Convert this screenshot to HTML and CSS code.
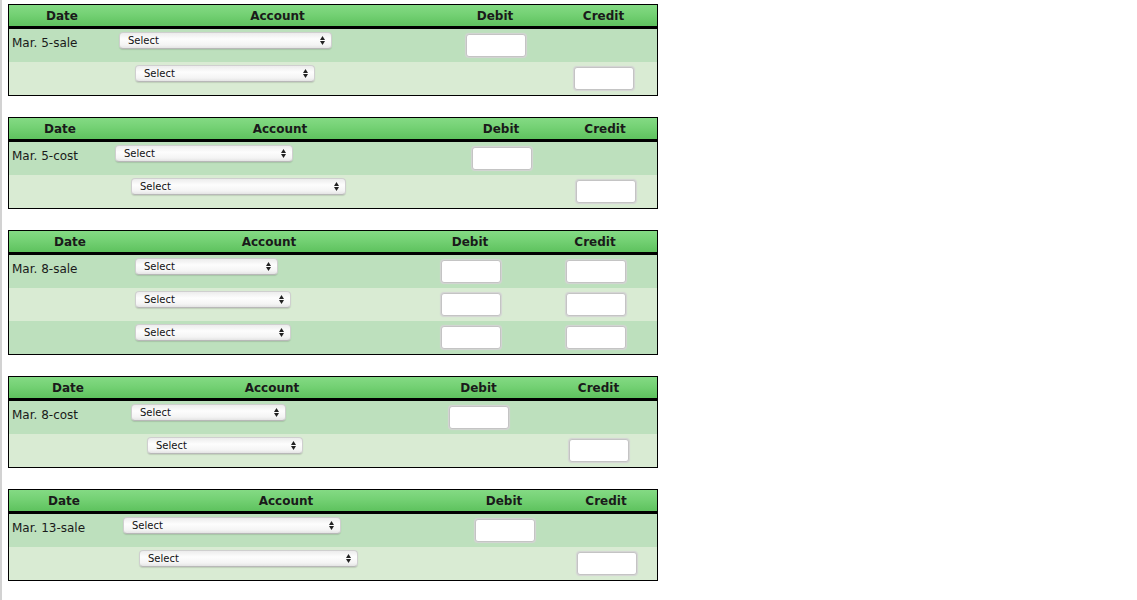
FILE: index.html
```html
<!DOCTYPE html>
<html lang="en">

<head>
    <meta charset="UTF-8">
    <meta name="viewport" content="width=device-width, initial-scale=1.0">
    <title>Journal Entries</title>
    <link rel="stylesheet" href="styles.css">
</head>

<body>
    <div class="page">

        <!-- Mar. 5 sale -->
        <table class="journal j1">
            <colgroup><col class="c-date"><col class="c-acct"><col class="c-dr"><col class="c-cr"></colgroup>
            <thead>
                <tr><th>Date</th><th>Account</th><th>Debit</th><th>Credit</th></tr>
            </thead>
            <tbody>
                <tr>
                    <td class="date">Mar. 5-sale</td>
                    <td><span class="pick w213"><select><option>Select</option></select><svg viewBox="0 0 5 9"><path d="M0 4L2.5 0L5 4Z M0 5L2.5 9L5 5Z"/></svg></span></td>
                    <td><input class="amount" type="text"></td>
                    <td></td>
                </tr>
                <tr class="alt">
                    <td></td>
                    <td><span class="pick indent w180"><select><option>Select</option></select><svg viewBox="0 0 5 9"><path d="M0 4L2.5 0L5 4Z M0 5L2.5 9L5 5Z"/></svg></span></td>
                    <td></td>
                    <td><input class="amount" type="text"></td>
                </tr>
            </tbody>
        </table>

        <!-- Mar. 5 cost -->
        <table class="journal j2">
            <colgroup><col class="c-date"><col class="c-acct"><col class="c-dr"><col class="c-cr"></colgroup>
            <thead>
                <tr><th>Date</th><th>Account</th><th>Debit</th><th>Credit</th></tr>
            </thead>
            <tbody>
                <tr>
                    <td class="date">Mar. 5-cost</td>
                    <td><span class="pick w178"><select><option>Select</option></select><svg viewBox="0 0 5 9"><path d="M0 4L2.5 0L5 4Z M0 5L2.5 9L5 5Z"/></svg></span></td>
                    <td><input class="amount" type="text"></td>
                    <td></td>
                </tr>
                <tr class="alt">
                    <td></td>
                    <td><span class="pick indent w215"><select><option>Select</option></select><svg viewBox="0 0 5 9"><path d="M0 4L2.5 0L5 4Z M0 5L2.5 9L5 5Z"/></svg></span></td>
                    <td></td>
                    <td><input class="amount" type="text"></td>
                </tr>
            </tbody>
        </table>

        <!-- Mar. 8 sale -->
        <table class="journal j3">
            <colgroup><col class="c-date"><col class="c-acct"><col class="c-dr"><col class="c-cr"></colgroup>
            <thead>
                <tr><th>Date</th><th>Account</th><th>Debit</th><th>Credit</th></tr>
            </thead>
            <tbody>
                <tr>
                    <td class="date">Mar. 8-sale</td>
                    <td><span class="pick w143"><select><option>Select</option></select><svg viewBox="0 0 5 9"><path d="M0 4L2.5 0L5 4Z M0 5L2.5 9L5 5Z"/></svg></span></td>
                    <td><input class="amount" type="text"></td>
                    <td><input class="amount" type="text"></td>
                </tr>
                <tr class="alt">
                    <td></td>
                    <td><span class="pick w156"><select><option>Select</option></select><svg viewBox="0 0 5 9"><path d="M0 4L2.5 0L5 4Z M0 5L2.5 9L5 5Z"/></svg></span></td>
                    <td><input class="amount" type="text"></td>
                    <td><input class="amount" type="text"></td>
                </tr>
                <tr>
                    <td></td>
                    <td><span class="pick w156"><select><option>Select</option></select><svg viewBox="0 0 5 9"><path d="M0 4L2.5 0L5 4Z M0 5L2.5 9L5 5Z"/></svg></span></td>
                    <td><input class="amount" type="text"></td>
                    <td><input class="amount" type="text"></td>
                </tr>
            </tbody>
        </table>

        <!-- Mar. 8 cost -->
        <table class="journal j4">
            <colgroup><col class="c-date"><col class="c-acct"><col class="c-dr"><col class="c-cr"></colgroup>
            <thead>
                <tr><th>Date</th><th>Account</th><th>Debit</th><th>Credit</th></tr>
            </thead>
            <tbody>
                <tr>
                    <td class="date">Mar. 8-cost</td>
                    <td><span class="pick w155"><select><option>Select</option></select><svg viewBox="0 0 5 9"><path d="M0 4L2.5 0L5 4Z M0 5L2.5 9L5 5Z"/></svg></span></td>
                    <td><input class="amount" type="text"></td>
                    <td></td>
                </tr>
                <tr class="alt">
                    <td></td>
                    <td><span class="pick indent w156"><select><option>Select</option></select><svg viewBox="0 0 5 9"><path d="M0 4L2.5 0L5 4Z M0 5L2.5 9L5 5Z"/></svg></span></td>
                    <td></td>
                    <td><input class="amount" type="text"></td>
                </tr>
            </tbody>
        </table>

        <!-- Mar. 13 sale -->
        <table class="journal j5">
            <colgroup><col class="c-date"><col class="c-acct"><col class="c-dr"><col class="c-cr"></colgroup>
            <thead>
                <tr><th>Date</th><th>Account</th><th>Debit</th><th>Credit</th></tr>
            </thead>
            <tbody>
                <tr>
                    <td class="date">Mar. 13-sale</td>
                    <td><span class="pick w218"><select><option>Select</option></select><svg viewBox="0 0 5 9"><path d="M0 4L2.5 0L5 4Z M0 5L2.5 9L5 5Z"/></svg></span></td>
                    <td><input class="amount" type="text"></td>
                    <td></td>
                </tr>
                <tr class="alt">
                    <td></td>
                    <td><span class="pick indent w219"><select><option>Select</option></select><svg viewBox="0 0 5 9"><path d="M0 4L2.5 0L5 4Z M0 5L2.5 9L5 5Z"/></svg></span></td>
                    <td></td>
                    <td><input class="amount" type="text"></td>
                </tr>
            </tbody>
        </table>

    </div>
</body>

</html>
```

FILE: styles.css
```css
body {
    margin: 0;
    background: #fff;
    font-family: "DejaVu Sans", Verdana, sans-serif;
    font-size: 12px;
    color: #1a1a1a;
}

.page {
    border-left: 2px solid #d2d2d2;
    min-height: 100vh;
    padding: 4px 0 0 6px;
    box-sizing: border-box;
    display: flex;
    flex-direction: column;
    gap: 21px;
}

.journal {
    width: 650px;
    table-layout: fixed;
    border-collapse: separate;
    border-spacing: 0;
    border: 1px solid #000;
}

.journal th {
    height: 21px;
    padding: 0;
    font-weight: bold;
    font-size: 12px;
    text-align: center;
    vertical-align: middle;
    background: linear-gradient(#84da84, #74d174 45%, #5ec25e);
    border-bottom: 3px solid #000;
}

.journal td {
    height: 33px;
    padding: 5px 3px 0 4px;
    box-sizing: border-box;
    vertical-align: top;
    background: #bde0bd;
}

.journal tr.alt td {
    background: #d9ebd3;
}

.journal td.date {
    padding: 7px 0 0 3px;
    line-height: 15px;
    white-space: nowrap;
}

/* column widths for each entry */
.j1 .c-date { width: 106px; }
.j1 .c-acct { width: 325px; }
.j1 .c-dr { width: 110px; }
.j1 .c-cr { width: 107px; }

.j2 .c-date { width: 102px; }
.j2 .c-acct { width: 338px; }
.j2 .c-dr { width: 104px; }
.j2 .c-cr { width: 104px; }

.j3 .c-date { width: 122px; }
.j3 .c-acct { width: 276px; }
.j3 .c-dr { width: 126px; }
.j3 .c-cr { width: 124px; }

.j4 .c-date { width: 118px; }
.j4 .c-acct { width: 290px; }
.j4 .c-dr { width: 123px; }
.j4 .c-cr { width: 117px; }

.j5 .c-date { width: 110px; }
.j5 .c-acct { width: 334px; }
.j5 .c-dr { width: 102px; }
.j5 .c-cr { width: 102px; }

/* account dropdown */
.pick {
    position: relative;
    display: block;
    height: 17px;
    margin-top: -2px;
}

.pick.indent {
    margin-left: 16px;
}

.pick select {
    -webkit-appearance: none;
    appearance: none;
    width: 100%;
    height: 17px;
    margin: 0;
    padding: 0 0 0 8px;
    box-sizing: border-box;
    font-family: "DejaVu Sans", "Lucida Grande", sans-serif;
    font-size: 10px;
    color: #111;
    border: 1px solid #cfcfcf;
    border-bottom-color: #b8b8b8;
    border-radius: 4px;
    background: linear-gradient(#ececec, #fdfdfd 40%, #f4f4f4 80%, #e4e4e4);
    box-shadow: 0 1px 1px rgba(0, 0, 0, 0.12);
    outline: none;
}

.pick svg {
    position: absolute;
    right: 7px;
    top: 4px;
    width: 5px;
    height: 9px;
    fill: #222;
    pointer-events: none;
}

.w143 { width: 143px; }
.w155 { width: 155px; }
.w156 { width: 156px; }
.w178 { width: 178px; }
.w180 { width: 180px; }
.w213 { width: 213px; }
.w215 { width: 215px; }
.w218 { width: 218px; }
.w219 { width: 219px; }

/* debit / credit boxes */
.amount {
    display: block;
    width: 60px;
    height: 23px;
    margin: 0 auto;
    padding: 0 4px;
    box-sizing: border-box;
    border: 1px solid #c4c4c4;
    border-radius: 3px;
    background: #fff;
    box-shadow: 0 0 1px 1px #d4d4d4;
    font-size: 12px;
    outline: none;
}
```
